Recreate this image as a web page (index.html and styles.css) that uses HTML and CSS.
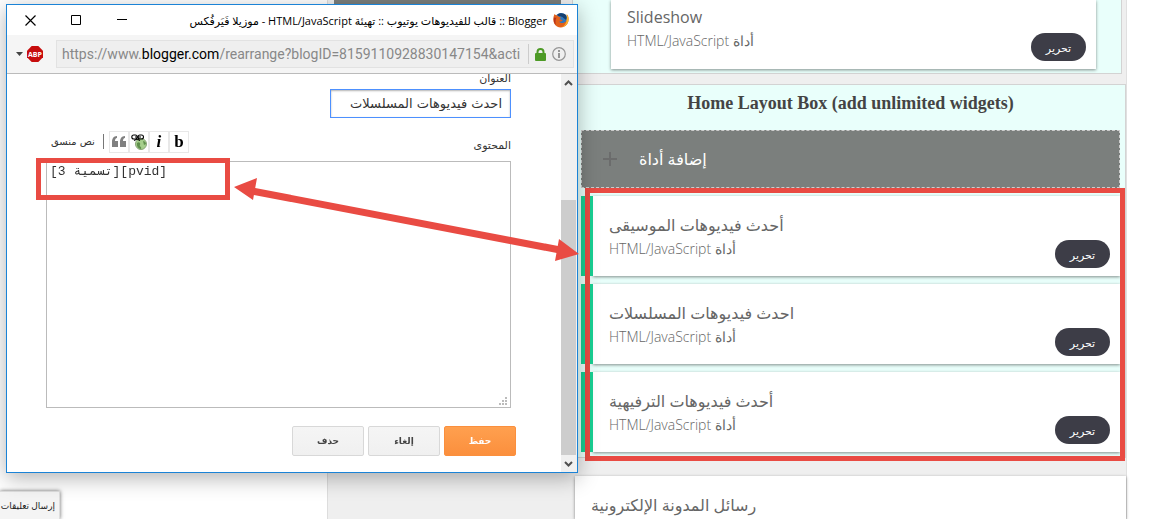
FILE: index.html
```
<!DOCTYPE html>
<html lang="ar" dir="rtl">
<head>
    <meta charset="UTF-8">
    <meta name="viewport" content="width=device-width, initial-scale=1.0">
    <title>Blogger :: تهيئة HTML/JavaScript</title>
    <link rel="stylesheet" href="styles.css">
</head>

<body>

    <div class="page">
        <main class="layout">
            <div class="side-column">
                <div class="side-bar"></div>
            </div>
            <div class="main-column">
                <section class="section slideshow">
                    <article class="widget">
                        <div class="widget-text">
                            <h3>Slideshow</h3>
                            <p>أداة HTML/JavaScript</p>
                        </div>
                        <button class="btn-edit" type="button">تحرير</button>
                    </article>
                </section>

                <section class="section home">
                    <h2>Home Layout Box (add unlimited widgets)</h2>
                    <button class="add-widget" type="button">
                        <svg width="14" height="14" viewBox="0 0 14 14"><path d="M6 0h2v6h6v2H8v6H6V8H0V6h6z" fill="#6b6c6c"/></svg>
                        <span>إضافة أداة</span>
                    </button>
                    <div class="widget-list">
                        <article class="widget marked">
                            <div class="widget-text">
                                <h3>أحدث فيديوهات الموسيقى</h3>
                                <p>أداة HTML/JavaScript</p>
                            </div>
                            <button class="btn-edit" type="button">تحرير</button>
                        </article>
                        <article class="widget marked">
                            <div class="widget-text">
                                <h3>احدث فيديوهات المسلسلات</h3>
                                <p>أداة HTML/JavaScript</p>
                            </div>
                            <button class="btn-edit" type="button">تحرير</button>
                        </article>
                        <article class="widget marked">
                            <div class="widget-text">
                                <h3>أحدث فيديوهات الترفيهية</h3>
                                <p>أداة HTML/JavaScript</p>
                            </div>
                            <button class="btn-edit" type="button">تحرير</button>
                        </article>
                        <div class="frame frame-widgets"></div>
                    </div>
                </section>

                <section class="widget messages">
                    <div class="widget-text">
                        <h3>رسائل المدونة الإلكترونية</h3>
                    </div>
                </section>
            </div>
        </main>
    </div>

    <button class="feedback" type="button">إرسال تعليقات</button>

    <div class="window">
        <header class="title-bar">
            <div class="window-controls">
                <button type="button" aria-label="إغلاق"><svg width="11" height="11" viewBox="0 0 11 11"><path d="M.5.5l10 10M10.5.5l-10 10" stroke="#000" stroke-width="1.2"/></svg></button>
                <button type="button" aria-label="تكبير"><svg width="11" height="11" viewBox="0 0 11 11"><path d="M.5.5h9v9h-9z" fill="none" stroke="#000"/></svg></button>
                <button type="button" aria-label="تصغير"><svg width="11" height="11" viewBox="0 0 11 11"><path d="M0 4.500h10" stroke="#000"/></svg></button>
            </div>
            <div class="window-title" dir="rtl">Blogger :: قالب للفيديوهات يوتيوب :: تهيئة HTML/JavaScript - موزيلا فَيَرفُكس</div>
            <svg class="firefox" width="16" height="16" viewBox="0 0 16 16">
                <circle cx="8" cy="7" r="6" fill="#2f78bd"/>
                <path d="M4 3C6 .5 11 .5 13.500 3.500c.5 2 .3 3-.5 4.500-1-1.500-2-1-3-2.500C9 4 6 5 4 3z" fill="#16406f"/>
                <path d="M1.500 2C0 5 0 9 1.200 11.500 3 15 7 16.200 10.500 15c4-1.400 6-6 4.800-10.200-.3-1.200-1-2-1.600-2.600.6 2.300.5 6-1.200 7.600-2 1.900-5.300 1.500-6.300-.4 1.500.6 2.600-.2 3.700-1-1.500.1-1.700-1.300-3.500-1 .2-1 1.500-1.300 1.500-2.200C6.500 5 5.300 4.700 5 3.700c-1 0-2.700-.5-3.500-1.700z" fill="#e2611b"/>
                <path d="M13.700 2.200c2 2 2.400 5.500 1.200 8.300-1.200 2.700-3.700 4.500-6.400 4.800 3.500-1.500 6.300-5.500 5.200-13.100z" fill="#fbb62c"/>
                <path d="M1 5c-.8 3 0 6.300 1.800 8C2.500 11 2 8 3.500 5.500 2.500 6 1.500 6 1 5z" fill="#b7321b"/>
            </svg>
        </header>

        <div class="address-bar">
            <svg class="caret" width="7" height="4" viewBox="0 0 7 4"><path d="M0 0h7L3.500 4z" fill="#444"/></svg>
            <svg width="16" height="16" viewBox="0 0 16 16">
                <path d="M4.700 0h6.600L16 4.700v6.600L11.300 16H4.700L0 11.300V4.700z" fill="#c70d0d"/>
                <text x="8" y="11" class="abp">ABP</text>
            </svg>
            <div class="address">
                <div class="url" role="textbox" contenteditable="true" spellcheck="false" aria-label="العنوان">https://www.<b>blogger.com</b>/rearrange?blogID=8159110928830147154&amp;acti</div>
                <svg width="11" height="13" viewBox="0 0 11 13"><path d="M2.500 6V4a3 3 0 0 1 6 0v2" fill="none" stroke="#4d9a26" stroke-width="2"/><rect y="5" width="11" height="8" rx="1" fill="#4d9a26"/></svg>
                <svg width="14" height="14" viewBox="0 0 14 14"><circle cx="7" cy="7" r="6.300" fill="none" stroke="#969696" stroke-width="1.200"/><path d="M6 3h2v2H6zM6 6h2v5H6z" fill="#969696"/></svg>
            </div>
        </div>

        <div class="window-body">
            <form class="widget-form" dir="rtl">
                <label for="widget_title">العنوان</label>
                <input type="text" id="widget_title" value="احدث فيديوهات المسلسلات" autofocus>
                <div class="content-row">
                    <label for="widget_content">المحتوى</label>
                    <div class="toolbar">
                        <button class="rich-text" type="button">نص منسق</button>
                        <button class="tool" type="button" aria-label="اقتباس"><svg width="14" height="12" viewBox="0 0 14 12"><path d="M5 0v2C3.500 2.200 3 3.500 3 5h3v6H0V6C0 2.500 1.500.3 5 0zM13 0v2c-1.500.2-2 1.500-2 3h3v6H8V6c0-3.500 1.500-5.700 5-6z" fill="#808080"/></svg></button>
                        <button class="tool" type="button" aria-label="رابط"><svg width="16" height="16" viewBox="0 0 16 16"><circle cx="10" cy="10" r="5.500" fill="#a6cf8c" stroke="#8aa57a"/><path d="M6 9c2-2 4 0 3 2s2 1 1 4c-3-.5-4.500-3-4-6zM12 7c1 0 3 1 3 3l-2 1z" fill="#5f8f4c"/><g fill="none" stroke="#000" stroke-width="1.100"><rect x=".8" y="1" width="5.500" height="4" rx="2"/><rect x="7" y="1" width="5.500" height="4" rx="2"/><path d="M4 3h6M3 6.500l3-1.500 3 1.500"/></g></svg></button>
                        <button class="tool italic" type="button">i</button>
                        <button class="tool bold" type="button">b</button>
                    </div>
                </div>
                <div class="content-box">
                    <textarea id="widget_content" dir="ltr" spellcheck="false">[تسمية 3][pvid]</textarea>
                    <svg class="grip" width="8" height="8" viewBox="0 0 8 8"><path d="M6 0h2v2H6zM3 3h2v2H3zM6 3h2v2H6zM0 6h2v2H0zM3 6h2v2H3zM6 6h2v2H6z" fill="#bbb"/></svg>
                </div>
                <div class="actions">
                    <button class="btn primary" type="submit">حفظ</button>
                    <button class="btn" type="button">إلغاء</button>
                    <button class="btn" type="button">حذف</button>
                </div>
            </form>
            <div class="scrollbar">
                <svg width="9" height="6" viewBox="0 0 9 6"><path d="M1 5l3.500-3.500L8 5" fill="none" stroke="#505050" stroke-width="2"/></svg>
                <div class="thumb"></div>
                <svg width="9" height="6" viewBox="0 0 9 6"><path d="M1 1l3.500 3.500L8 1" fill="none" stroke="#505050" stroke-width="2"/></svg>
            </div>
        </div>
    </div>

    <div class="frame frame-code"></div>
    <svg class="arrow" width="346" height="84" viewBox="0 0 346 84">
        <path d="M18 14l308 59" stroke="#e94b43" stroke-width="7"/>
        <path d="M0 10l23-9-4 22z M345 77l-20-15-4 22z" fill="#e94b43"/>
    </svg>

</body>
</html>
```
FILE: styles.css
```
* {
    box-sizing: border-box;
}
body {
    margin: 0;
    height: 100vh;
    overflow: hidden;
    position: relative;
    direction: ltr;
    background-color: white;
    font-family: "Open Sans", "DejaVu Sans", sans-serif;
}
button {
    font-family: inherit;
    cursor: pointer;
}
h2, h3, p {
    margin: 0;
}

/* page layout editor */
.page {
    height: 100%;
    padding: 0 44px 0 327px;
}
.layout {
    display: flex;
    height: 100%;
    background-color: #efefef;
    border-left: 1px solid #ddd;
    border-right: 1px solid #e0e0e0;
}
.side-column {
    width: 239px;
    padding: 0 6px;
}
.side-bar {
    height: 4px;
    background-color: #7b7f7d;
}
.main-column {
    flex: 1;
    display: flex;
    flex-direction: column;
    padding-left: 5px;
}
.section {
    background-color: #e9fffb;
    border: 1px solid #d3d3d3;
}
.slideshow {
    margin-right: 4px;
    padding: 0 25px 4px 38px;
    border-top: none;
}
.slideshow .widget {
    height: 69px;
    padding-top: 6px;
}
.home {
    margin-top: 10px;
    padding: 6px 5px 5px 8px;
}
.home h2 {
    font: bold 18px/24px "Liberation Serif", serif;
    color: #444;
    text-align: center;
}
.add-widget {
    display: flex;
    align-items: center;
    gap: 22px;
    width: 100%;
    height: 58px;
    margin: 15px 0 8px;
    padding: 0 21px;
    background-color: #7b7f7d;
    border: 1px dashed #ccc;
    color: white;
    font-size: 16px;
}
.widget-list {
    position: relative;
    display: flex;
    flex-direction: column;
    gap: 8px;
}
.widget {
    display: flex;
    justify-content: space-between;
    background-color: white;
    box-shadow: 0 1px 3px rgba(0,0,0,0.45);
}
.widget-text {
    padding-left: 16px;
    direction: rtl;
    text-align: left;
}
.widget h3 {
    font-size: 16px;
    line-height: 22px;
    font-weight: normal;
    color: #666;
}
.widget p {
    font-size: 14px;
    line-height: 26px;
    font-weight: 300;
    color: #666;
}
.marked {
    height: 80px;
    margin-left: 12px;
    padding-top: 18px;
    box-shadow: -12px 0 0 #18cf92, 0 1px 3px rgba(0,0,0,0.45);
}
.btn-edit {
    align-self: flex-end;
    width: 55px;
    height: 28px;
    margin: 0 10px 8px;
    padding: 0;
    border: none;
    border-radius: 14px;
    background-color: #3d3d47;
    color: white;
    font-size: 11px;
}
.messages {
    flex: 1;
    margin: 18px 0 0 3px;
    padding-top: 18px;
}
.feedback {
    position: absolute;
    left: 0;
    bottom: 0;
    height: 28px;
    width: 60px;
    padding: 0 4px 0 0;
    border: 1px solid #ddd;
    border-width: 1px 1px 0 0;
    background-color: #f4f4f4;
    box-shadow: 0 0 4px rgba(0,0,0,0.6);
    color: #222;
    font-size: 9px;
    text-align: right;
    white-space: nowrap;
    direction: rtl;
}

/* popup browser window */
.window {
    position: absolute;
    left: 6px;
    top: 4px;
    width: 572px;
    height: 469px;
    display: flex;
    flex-direction: column;
    background-color: white;
    border: 1px solid #1b83d6;
    box-shadow: 0 5px 20px rgba(0,0,0,0.3);
}
.title-bar {
    display: flex;
    align-items: center;
    height: 30px;
    padding-right: 8px;
}
.window-controls {
    display: flex;
}
.window-controls button {
    display: flex;
    justify-content: center;
    width: 46px;
    padding: 0;
    border: none;
    background: none;
}
.window-title {
    flex: 1;
    padding-right: 6px;
    font-size: 11px;
    color: #000;
    white-space: nowrap;
}
.address-bar {
    display: flex;
    align-items: center;
    gap: 4px;
    height: 39px;
    padding: 0 3px 0 9px;
    background-color: #f5f5f5;
    border-bottom: 1px solid #bbb;
}
.abp {
    font: bold 7px "Open Sans", sans-serif;
    fill: white;
    text-anchor: middle;
}
.address {
    flex: 1;
    min-width: 0;
    display: flex;
    align-items: center;
    gap: 6px;
    height: 28px;
    margin-left: 9px;
    padding: 0 7px 0 5px;
    background-color: #efefef;
    border: 1px solid #e2e2e2;
}
.url {
    flex: 1;
    overflow: hidden;
    white-space: nowrap;
    font-family: Roboto, sans-serif;
    font-size: 14px;
    line-height: 20px;
    color: #888;
    border-right: 1px solid #ccc;
}
.url b {
    font-weight: normal;
    color: #000;
}
.window-body {
    flex: 1;
    min-height: 0;
    display: flex;
}
.widget-form {
    flex: 1;
    display: flex;
    flex-direction: column;
    align-items: flex-start;
    padding: 0 50px 0 39px;
    font-family: "DejaVu Sans", sans-serif;
    color: #333;
}
.widget-form label {
    padding-bottom: 5px;
    font-size: 11px;
    line-height: 10px;
}
#widget_title {
    width: 181px;
    height: 29px;
    padding: 0 8px;
    border: 1px solid #4d90fe;
    outline: none;
    box-shadow: inset 0 1px 2px rgba(0,0,0,0.3);
    font: 13px "DejaVu Sans", sans-serif;
    color: #333;
}
.content-row {
    display: flex;
    justify-content: space-between;
    align-items: center;
    width: 100%;
    height: 43px;
}
.content-row label {
    padding-top: 18px;
}
.toolbar {
    display: flex;
    align-items: center;
    direction: ltr;
    padding: 4px 0 0 5px;
}
.tool {
    display: flex;
    align-items: center;
    justify-content: center;
    width: 20px;
    height: 22px;
    padding: 0;
    border: 1px solid #e8e8e8;
    background-color: white;
    font: bold 17px "Liberation Serif", serif;
    color: #000;
}
.italic {
    font-style: italic;
}
.rich-text {
    height: 15px;
    margin-right: 5px;
    padding: 0 8px 0 0;
    border: none;
    border-right: 1px solid #777;
    background: none;
    font-size: 10px;
    color: #333;
}
.content-box {
    position: relative;
    width: 100%;
    height: 247px;
}
#widget_content {
    display: block;
    width: 100%;
    height: 100%;
    padding: 1px 3px;
    border: 1px solid #bbb;
    resize: none;
    font: 13px/18px "Liberation Mono", "DejaVu Sans Mono", monospace;
    color: #333;
}
.grip {
    position: absolute;
    right: 4px;
    bottom: 3px;
}
.actions {
    display: flex;
    gap: 4px;
    margin: 18px -5px 0 0;
}
.btn {
    width: 72px;
    height: 30px;
    padding: 0;
    border: 1px solid #d8d8d8;
    border-radius: 2px;
    background: linear-gradient(#f5f5f5, #f0f0f0);
    font-size: 9px;
    font-weight: bold;
    color: #444;
}
.primary {
    border-color: #fb8f3d;
    background: linear-gradient(#ffa04f, #fb8f3d);
    color: white;
}
.scrollbar {
    display: flex;
    flex-direction: column;
    align-items: center;
    width: 16px;
    padding: 6px 1px 5px 0;
    background-color: #f0f0f0;
}
.thumb {
    width: 100%;
    height: 255px;
    margin: auto 0 6px;
    background-color: #cdcdcd;
}

/* red marks over the page */
.frame {
    position: absolute;
    border: 5px solid #e94b43;
    pointer-events: none;
}
.frame-widgets {
    inset: -8px -5px -9px 4px;
}
.frame-code {
    left: 36px;
    top: 158px;
    width: 194px;
    height: 42px;
}
.arrow {
    position: absolute;
    left: 234px;
    top: 177px;
    pointer-events: none;
}
```
